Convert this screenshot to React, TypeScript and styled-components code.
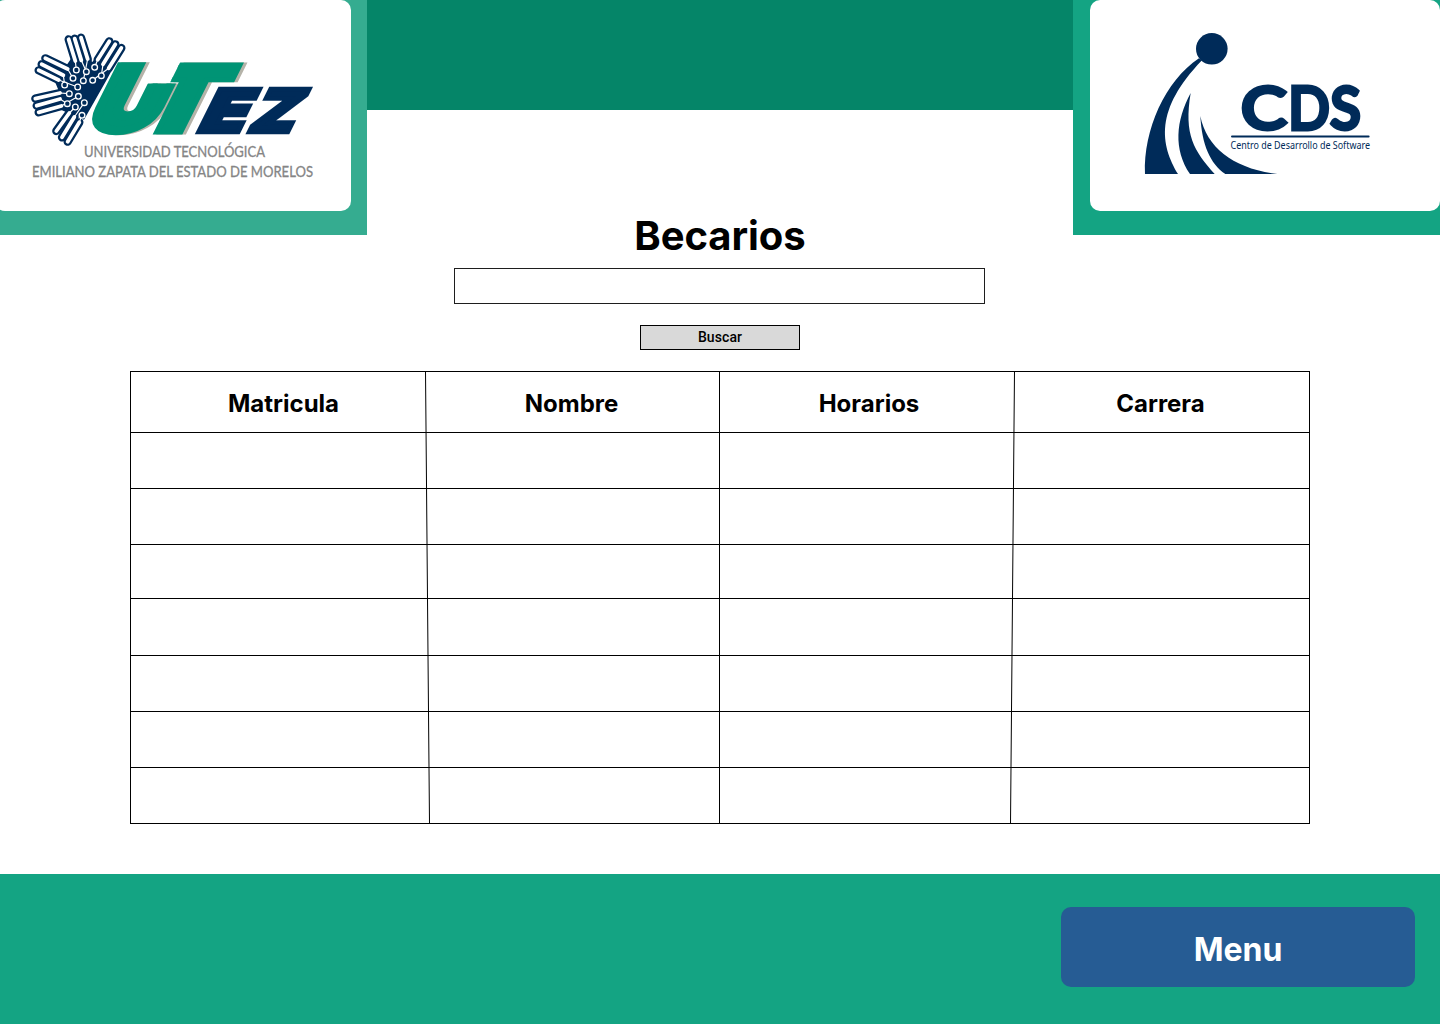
import React from "react";
import styled, { createGlobalStyle } from "styled-components";

const NAVY = "#002b59";
const LOGO_GREEN = "#009475";

const GlobalStyle = createGlobalStyle`
  * { box-sizing: border-box; }
  html, body { margin: 0; padding: 0; background: #fff; }
  body { font-family: Inter, "Liberation Sans", sans-serif; color: #000; }
`;

const Page = styled.div`
  width: 1440px;
  height: 1024px;
  display: flex;
  flex-direction: column;
  overflow: hidden;
  background: #fff;
`;

const Header = styled.header`
  height: 211px;
  display: flex;
  justify-content: space-between;
  align-items: flex-start;
`;

const HeaderBar = styled.div`
  flex: 1;
  height: 110px;
  background: #058568;
`;

const LogoPanel = styled.div<{ $tone: string; $align: "left" | "right" }>`
  width: 367px;
  height: 235px;
  flex: none;
  display: flex;
  justify-content: ${(p) => (p.$align === "left" ? "flex-start" : "flex-end")};
  align-items: flex-start;
  background: ${(p) => p.$tone};
`;

const LogoCard = styled.div<{ $width: number; $bleed?: number }>`
  width: ${(p) => p.$width}px;
  height: 211px;
  margin-left: ${(p) => -(p.$bleed ?? 0)}px;
  padding-left: ${(p) => p.$bleed ?? 0}px;
  border-radius: 10px;
  background: #fff;

  svg { display: block; }
`;

const Main = styled.main`
  flex: 1;
  display: flex;
  flex-direction: column;
  align-items: center;
`;

const Title = styled.h1`
  margin: 0;
  height: 57px;
  font-size: 40px;
  line-height: 50px;
  font-weight: 700;
  letter-spacing: -0.05px;
`;

const SearchInput = styled.input`
  width: 531px;
  height: 36px;
  margin: 0 1px 0 0;
  padding: 0 12px;
  border: 1px solid #1e1e1e;
  border-radius: 0;
  background: #fff;
  outline: none;
  font: 400 16px Inter, sans-serif;
`;

const SearchButton = styled.button`
  width: 160px;
  height: 25px;
  margin: 21px 0;
  padding: 0;
  border: 1px solid #000;
  background: #d9d9d9;
  color: #000;
  font: 500 14px/23px Roboto, sans-serif;
  letter-spacing: 0.1px;
`;

const Table = styled.div`
  position: relative;
  width: 1180px;
  display: grid;
  grid-template-rows: 61px 56px 56px 54px 57px 56px 56px 56px;
  border: 1px solid #000;
  border-bottom: 0;
  height: 453px;
`;

const Row = styled.div`
  display: grid;
  grid-template-columns: 294px 294px 295px 295px;
  border-bottom: 1px solid #000;
`;

const HeadCell = styled.div<{ $shift: number }>`
  padding-left: ${(p) => Math.max(p.$shift, 0) * 2}px;
  padding-right: ${(p) => Math.max(-p.$shift, 0) * 2}px;
  text-align: center;
  font-size: 24px;
  line-height: 63px;
  font-weight: 700;
`;

const Cell = styled.div``;

const Rules = styled.svg`
  position: absolute;
  left: -1px;
  top: -1px;
  pointer-events: none;
`;

const Footer = styled.footer`
  height: 150px;
  flex: none;
  display: flex;
  justify-content: flex-end;
  align-items: flex-start;
  padding: 33px 25px 0 0;
  background: #14a483;
`;

const MenuButton = styled.button`
  width: 354px;
  height: 80px;
  padding: 6px 0 0;
  border: 0;
  border-radius: 10px;
  background: #265c94;
  color: #fff;
  font: 700 32px/40px Inter, sans-serif;
`;

type Point = [number, number];
type Finger = { tip: Point; base: Point; node: Point };

const fingers: Finger[] = [
  { tip: [146, 43], base: [166, 108], node: [169, 135] },
  { tip: [164, 41], base: [184, 106], node: [199, 140] },
  { tip: [183, 38], base: [203, 102], node: [190, 167] },
  { tip: [268, 49], base: [233, 104], node: [224, 127] },
  { tip: [286, 58], base: [249, 118], node: [244, 152] },
  { tip: [304, 69], base: [266, 130], node: [218, 166] },
  { tip: [76, 100], base: [143, 132], node: [159, 160] },
  { tip: [65, 118], base: [130, 151], node: [134, 180] },
  { tip: [56, 136], base: [116, 165], node: [173, 186] },
  { tip: [46, 221], base: [120, 204], node: [148, 206] },
  { tip: [50, 242], base: [120, 222], node: [142, 236] },
  { tip: [56, 262], base: [124, 243], node: [175, 214] },
  { tip: [109, 318], base: [148, 264], node: [166, 246] },
  { tip: [126, 337], base: [163, 276], node: [193, 233] },
  { tip: [143, 350], base: [178, 292], node: [186, 271] },
];

const line = (a: Point, b: Point) => `M${a[0]} ${a[1]}L${b[0]} ${b[1]}`;

function Hand() {
  return (
    <g transform="translate(20 25) scale(.33333)" strokeLinecap="round" fill="none">
      <path
        d="M154 100L212 92 216 112 232 94 284 120 258 168 192 284 150 266 112 250 118 202 104 168 136 126Z"
        fill={NAVY}
      />
      {fingers.map((f, i) => (
        <path key={i} d={line(f.tip, f.base)} stroke={NAVY} strokeWidth="25" />
      ))}
      {fingers.map((f, i) => (
        <path key={i} d={line(f.tip, f.base)} stroke="#fff" strokeWidth="11.5" />
      ))}
      {fingers.map((f, i) => (
        <path key={i} d={line(f.base, f.node)} stroke="#fff" strokeWidth="3.5" />
      ))}
      {fingers.map((f, i) => (
        <circle key={i} cx={f.node[0]} cy={f.node[1]} r="8.5" fill={NAVY} stroke="#fff" strokeWidth="4" />
      ))}
    </g>
  );
}

const heavy = { fontFamily: "Inter, sans-serif", fontWeight: 900 } as const;

function GreenLetters({ color, dx }: { color: string; dx: number }) {
  return (
    <g transform={`translate(${dx} 134.5) skewX(-26.6)`} fill={color} stroke={color} style={heavy}>
      <g clipPath="url(#clip-u)">
        <text x="82" y="-5" fontSize="87" strokeWidth="9" textLength="68" lengthAdjust="spacingAndGlyphs">U</text>
      </g>
      <g clipPath="url(#clip-t)">
        <text x="127" y="-2.5" fontSize="92" strokeWidth="5" textLength="81" lengthAdjust="spacingAndGlyphs">T</text>
      </g>
    </g>
  );
}

function UtezLogo() {
  return (
    <svg width="351" height="211" viewBox="0 0 351 211">
      <defs>
        <clipPath id="clip-u"><path d="M70-80H112V-51H160V2H70Z" /></clipPath>
        <clipPath id="clip-t"><path d="M144-80H215V2H144Z" /></clipPath>
      </defs>
      <Hand />
      <GreenLetters color="#b5b3a9" dx={3.5} />
      <GreenLetters color={LOGO_GREEN} dx={0} />
      <g transform="translate(0 134.5) skewX(-26.6)" fill={NAVY} stroke={NAVY} strokeWidth="4.5" style={heavy}>
        <text x="194" y="-2.5" fontSize="59" textLength="46" lengthAdjust="spacingAndGlyphs">E</text>
        <text x="244.5" y="-2.5" fontSize="59" textLength="45.5" lengthAdjust="spacingAndGlyphs">Z</text>
      </g>
      <g fill="#858585" stroke="#858585" strokeWidth=".3" fontFamily="Lato, sans-serif" fontSize="14.5">
        <text x="84" y="157" textLength="181" lengthAdjust="spacingAndGlyphs">UNIVERSIDAD TECNOLÓGICA</text>
        <text x="32" y="176.5" textLength="281" lengthAdjust="spacingAndGlyphs">EMILIANO ZAPATA DEL ESTADO DE MORELOS</text>
      </g>
    </svg>
  );
}

function CdsLogo() {
  return (
    <svg width="350" height="211" viewBox="1090 0 350 211" fill={NAVY}>
      <circle cx="1211.8" cy="48.8" r="15.8" />
      <g transform="translate(1050 0) scale(.33333)">
        <path d="M447 175C345 243 280 390 285 522H384C332 435 312 330 456 181Z" />
        <path d="M422 279C377 362 370 449 420 522H494C432 452 401 405 422 279Z" />
        <path d="M451 348C456 435 480 490 526 522H682C555 507 470 445 451 348Z" />
      </g>
      <g fontFamily="Lato, sans-serif" fontWeight="400" stroke={NAVY} strokeWidth="4.8" fontSize="57.5">
        <text x="1241.3" y="129" textLength="45" lengthAdjust="spacingAndGlyphs">C</text>
        <text x="1288.5" y="129" textLength="41" lengthAdjust="spacingAndGlyphs">D</text>
        <text x="1330.5" y="129" textLength="30" lengthAdjust="spacingAndGlyphs">S</text>
      </g>
      <rect x="1231" y="135.4" width="138.6" height="2.2" rx="1" />
      <text x="1230.5" y="149.3" fontFamily="'Noto Sans', sans-serif" fontSize="10.5" textLength="139.5" lengthAdjust="spacingAndGlyphs">
        Centro de Desarrollo de Software
      </text>
    </svg>
  );
}

const columns = [
  { label: "Matricula", shift: 5.5 },
  { label: "Nombre", shift: -0.5 },
  { label: "Horarios", shift: 2.5 },
  { label: "Carrera", shift: -1 },
];

export default function App() {
  return (
    <>
      <GlobalStyle />
      <Page>
        <Header>
          <LogoPanel $tone="#35ac90" $align="left">
            <LogoCard $width={356} $bleed={5}><UtezLogo /></LogoCard>
          </LogoPanel>
          <HeaderBar />
          <LogoPanel $tone="#14a483" $align="right">
            <LogoCard $width={350}><CdsLogo /></LogoCard>
          </LogoPanel>
        </Header>
        <Main>
          <Title>Becarios</Title>
          <SearchInput aria-label="Becarios" />
          <SearchButton>Buscar</SearchButton>
          <Table>
            <Row>
              {columns.map((c) => (
                <HeadCell key={c.label} $shift={c.shift}>{c.label}</HeadCell>
              ))}
            </Row>
            {Array.from({ length: 7 }, (_, r) => (
              <Row key={r}>
                {columns.map((c) => <Cell key={c.label} />)}
              </Row>
            ))}
            <Rules width="1180" height="453" stroke="#000">
              <line x1="295.5" y1="0" x2="299.5" y2="453" />
              <line x1="589.5" y1="0" x2="589.5" y2="453" />
              <line x1="884.5" y1="0" x2="880.5" y2="453" />
            </Rules>
          </Table>
        </Main>
        <Footer>
          <MenuButton>Menu</MenuButton>
        </Footer>
      </Page>
    </>
  );
}
